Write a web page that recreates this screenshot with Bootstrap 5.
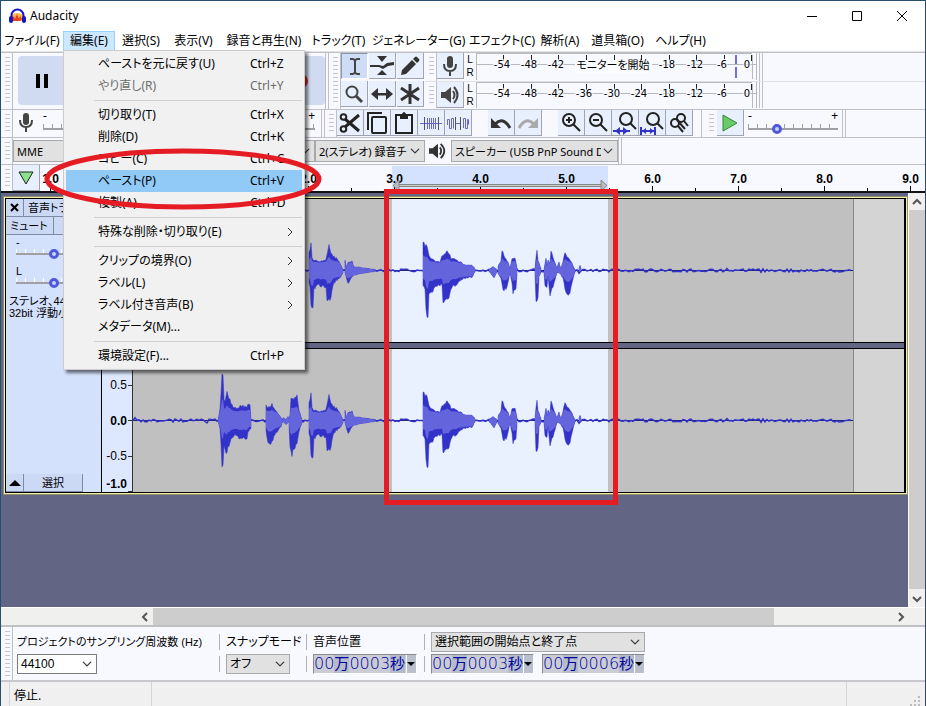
<!DOCTYPE html>
<html lang="ja">
<head>
<meta charset="utf-8">
<meta name="viewport" content="width=device-width, initial-scale=1">
<title>Audacity</title>
<link href="https://cdn.jsdelivr.net/npm/bootstrap@5.3.0/dist/css/bootstrap.min.css" rel="stylesheet">
<style>
:root{--line:#bfbfc6;--tool:#f8f9ff;--btn:#e8f0fe;--panel:#d4e1fc;--wave:#3232c8;--ring:#e51c23}
body{font-family:"Noto Sans","Noto Sans CJK JP",sans-serif;font-size:12px;line-height:16px;color:#000;background:#fff}
body,button,select{font-feature-settings:"palt"}
button{color:inherit;padding:0;border:0;background:none;white-space:nowrap}
svg{display:block;flex:none}
.app-window{min-height:100vh;border:1px solid #24506e;border-bottom:0;overflow:hidden}
.title-bar{height:30px}
.title-bar button{width:45px;height:28px}
.menu-row{height:21px;display:grid;grid-template-columns:62px 52px 52px 53px 88px 61px 99px 68px 48px 67px 59px;border-bottom:1px solid #e4e4e8}
.menu-row>div>button{width:100%;height:20px;border:1px solid transparent}
.menu-row>div>.menu-open{background:#cce8ff;border-color:#99d1ff}
.edit-menu.dropdown-menu{top:19px;left:0;width:242px;padding:2px;border:1px solid #ccc;border-radius:0;background:#f1f1f1;box-shadow:3px 3px 3px #0008;font-size:12px;color:#000}
.edit-menu .dropdown-item{display:flex;align-items:center;height:22px;padding:0 0 0 32px;color:#000}
.edit-menu .dropdown-item:disabled{color:#6d6d6d}
.edit-menu .item-current{background:#91c9f7}
.edit-menu .keys{width:52px}
.edit-menu .dropdown-divider{margin:3px 0 3px 28px;border-color:#d0d0d0;opacity:1}
.dock-row{border-top:1px solid var(--line);background:var(--tool)}
.row-h{height:28px}
.row-l{height:27px}
.grip{width:12px;align-self:stretch;border-right:1px solid var(--line);flex:none;background:repeating-linear-gradient(#c4c4cc 0 1px,transparent 1px 4px) 4px 4px/5px calc(100% - 8px) no-repeat}
.bar-end{width:4px;border-left:1px solid var(--line);border-right:1px solid var(--line);align-self:stretch;flex:none}
.transport{width:312px;padding:3px 0 0 5px;gap:3px}
.transport button{width:49px;height:49px;border-radius:4px;background:#d0daf0}
.mixer{width:308px;padding:0 6px 0 4px}
.tool-btn{width:27px;height:26px;background:var(--btn);border-right:1px solid #a0a4b0;border-bottom:1px solid #a0a4b0;display:flex;align-items:center;justify-content:center;flex:none}
.tool-on{background:#cfdcf6;border:1px solid #8d96aa;border-right-color:#fff;border-bottom-color:#fff}
.tool-grid{display:grid;grid-template-columns:repeat(3,28px);grid-auto-rows:28px}
.lr{width:12px;font:10px/13px "Liberation Sans",sans-serif;text-align:center}
.plain{font-family:"Liberation Sans","Noto Sans CJK JP",sans-serif}
.form-select.win{width:auto;min-width:0;height:22px;padding:0 16px 0 3px;border:1px solid #a9a9ad;border-radius:0;background-color:#e1e1e1;background-position:right 4px center;background-size:10px 10px;font-size:12px;line-height:19px;color:#000}
.dock-row .form-select.win{font-size:11px}
.form-select.white{background-color:#fff;border-color:#7a7a7a}
.slide{appearance:none;height:12px;margin:0;background:linear-gradient(#a0a0a4,#a0a0a4) 0 6px/100% 2px no-repeat,repeating-linear-gradient(90deg,#a0a0a4 0 1px,transparent 1px 9px) 0 2px/100% 4px no-repeat}
.slide::-webkit-slider-thumb{appearance:none;width:10px;height:10px;border:3px solid #5058dc;border-radius:50%;background:#c9d2ff;margin-top:2px}
.slide.pale{background:linear-gradient(#a0a0a4,#a0a0a4) 0 6px/100% 2px no-repeat,repeating-linear-gradient(90deg,#fff 0 1px,transparent 1px 9px) 0 2px/100% 4px no-repeat}
.signs{line-height:12px}
.speed{width:98px}
.time-row{height:29px;background:var(--tool);border-top:1px solid var(--line);border-bottom:2px solid #111}
.stage{background:#626584}
.track{border:2px solid #f3efa5;margin:3px 0 0 2px;outline:1px solid #8f8f70;outline-offset:-1px}
.track-in{border:1px solid #000;border-right-width:2px}
.t-panel{width:96px;background:var(--panel);border-right:1px solid #000;flex:none;font-size:11px;line-height:12px}
.t-panel button{height:18px;background:#ccd9f5;border-right:1px solid #7f8aa5;border-bottom:1px solid #7f8aa5}
.t-gain{padding:2px 10px 0;line-height:10px}
.t-pan{padding:7px 10px 0;line-height:10px}
.t-info{padding:7px 0 0 3px}
.t-gap{height:7px;background:#626584;border-top:1px solid #000;border-bottom:1px solid #000}
.v-scroll{width:17px;background:#f0f0f0;border-left:1px solid #fff;flex:none}
.thumb{background:#cdcdcd}
.h-scroll{height:18px;background:#f0f0ee;border-top:1px solid #fff}
.sel-dock{background:var(--tool);border-top:2px solid var(--line);border-bottom:2px solid #c8c8cc;height:57px}
.sel-dock .form-select.win{height:20px;line-height:17px}
.sel-grid{display:grid;grid-template:20px 20px/202px 87px 118px auto;gap:2px 0;padding:5px 0 0 4px;align-content:start;align-items:center}
.rate-label{font-size:11px}
.sel-group{background:linear-gradient(#b0b0b6,#b0b0b6) 0 2px/1px 16px no-repeat;padding-left:7px;height:20px;line-height:20px}
.clock{height:20px;border:1px solid #8a8a8a;border-right-color:#fff;border-bottom-color:#fff;background:#cbcdd6;color:#00009b;font-family:"DejaVu Sans","Noto Sans CJK JP",sans-serif;font-weight:200;font-size:16px;line-height:18px}
.clock b{font-weight:400;font-size:15px;background:#b4bbcd}
.clock .arrow{width:10px;background:#b9bfcc;border-left:1px solid #fff;color:#000;display:flex;align-items:center}
.status{height:24px;background:#f0f0f0}
.status span{border-left:1px solid #d5d5d5;padding:6px 4px 0}
.over{position:absolute;pointer-events:none;z-index:1100}
.ring{left:42px;top:147px}
.frame{left:383px;top:188px;width:234px;height:316px;border:5px solid var(--ring)}
</style>
<script src="https://cdn.jsdelivr.net/npm/bootstrap@5.3.0/dist/js/bootstrap.bundle.min.js"></script>
</head>
<body>
<div class="app-window d-flex flex-column position-relative">
<header class="title-bar d-flex align-items-center ps-2">
<svg width="17" height="16" viewBox="0 0 17 16"><path d="M3 7Q8 3 14 7V13H3Z" fill="#ffb64a"/><path d="M3 11l2-3 1 3 2-5 2 5 1-3 2 3-2 2H4Z" fill="#e4401c"/><path d="M2.500 10V7.500a6 6 0 0112 0V10" fill="none" stroke="#1414c8" stroke-width="2"/><rect x="0" y="8" width="4" height="7" rx="2" fill="#1414c8"/><rect x="13" y="8" width="4" height="7" rx="2" fill="#1414c8"/></svg>
<span class="ms-1">Audacity</span>
<div class="ms-auto d-flex">
<button aria-label="最小化"><svg class="m-auto" width="11" height="11"><path d="M0 5.500h10" stroke="#000"/></svg></button>
<button aria-label="最大化"><svg class="m-auto" width="11" height="11"><path d="M.5.500h9v9h-9z" stroke="#000" fill="none"/></svg></button>
<button aria-label="閉じる"><svg class="m-auto" width="11" height="11"><path d="M0 0l10 10M10 0L0 10" stroke="#000"/></svg></button>
</div>
</header>

<nav class="menu-row">
<div><button>ファイル(F)</button></div>
<div class="position-relative"><button class="menu-open" aria-expanded="true">編集(E)</button>
<ul class="dropdown-menu edit-menu show">
<li><button class="dropdown-item">ペーストを元に戻す(U)<span class="keys ms-auto">Ctrl+Z</span></button></li>
<li><button class="dropdown-item" disabled>やり直し(R)<span class="keys ms-auto">Ctrl+Y</span></button></li>
<li><hr class="dropdown-divider"></li>
<li><button class="dropdown-item">切り取り(T)<span class="keys ms-auto">Ctrl+X</span></button></li>
<li><button class="dropdown-item">削除(D)<span class="keys ms-auto">Ctrl+K</span></button></li>
<li><button class="dropdown-item">コピー(C)<span class="keys ms-auto">Ctrl+C</span></button></li>
<li><button class="dropdown-item item-current">ペースト(P)<span class="keys ms-auto">Ctrl+V</span></button></li>
<li><button class="dropdown-item">複製(A)<span class="keys ms-auto">Ctrl+D</span></button></li>
<li><hr class="dropdown-divider"></li>
<li><button class="dropdown-item">特殊な削除・切り取り(E)<svg class="ms-auto me-2" width="8" height="10"><path d="M2 1l4 4-4 4" fill="none" stroke="#333"/></svg></button></li>
<li><hr class="dropdown-divider"></li>
<li><button class="dropdown-item">クリップの境界(O)<svg class="ms-auto me-2" width="8" height="10"><path d="M2 1l4 4-4 4" fill="none" stroke="#333"/></svg></button></li>
<li><button class="dropdown-item">ラベル(L)<svg class="ms-auto me-2" width="8" height="10"><path d="M2 1l4 4-4 4" fill="none" stroke="#333"/></svg></button></li>
<li><button class="dropdown-item">ラベル付き音声(B)<svg class="ms-auto me-2" width="8" height="10"><path d="M2 1l4 4-4 4" fill="none" stroke="#333"/></svg></button></li>
<li><button class="dropdown-item">メタデータ(M)...</button></li>
<li><hr class="dropdown-divider"></li>
<li><button class="dropdown-item">環境設定(F)...<span class="keys ms-auto">Ctrl+P</span></button></li>
</ul></div>
<div><button>選択(S)</button></div>
<div><button>表示(V)</button></div>
<div><button>録音と再生(N)</button></div>
<div><button>トラック(T)</button></div>
<div><button>ジェネレーター(G)</button></div>
<div><button>エフェクト(C)</button></div>
<div><button>解析(A)</button></div>
<div><button>道具箱(O)</button></div>
<div><button>ヘルプ(H)</button></div>
</nav>

<section class="dock-row d-flex">
<div class="grip"></div>
<div class="transport d-flex">
<button aria-label="一時停止"><svg class="m-auto" width="14" height="14"><path d="M1 0h4v14H1zM9 0h4v14H9z"/></svg></button>
<button aria-label="再生"><svg class="m-auto" width="16" height="16"><path d="M2 1l12 7-12 7z" fill="#3a3"/></svg></button>
<button aria-label="停止"><svg class="m-auto" width="16" height="16"><path d="M2 2h12v12H2z"/></svg></button>
<button aria-label="先頭へ"><svg class="m-auto" width="16" height="16"><path d="M1 2h2v12H1zM14 2v12L4 8z"/></svg></button>
<button aria-label="末尾へ"><svg class="m-auto" width="16" height="16"><path d="M13 2h2v12h-2zM2 2v12l10-6z"/></svg></button>
<button aria-label="録音"><svg class="m-auto" width="16" height="16"><circle cx="8" cy="8" r="7" fill="#d22"/></svg></button>
</div>
<div class="bar-end"></div>
<div class="grip"></div>
<div class="tool-grid">
<button class="tool-btn tool-on" aria-label="選択ツール"><svg width="22" height="22" viewBox="0 0 22 22"><path d="M6 3h3l2 1 2-1h3v2h-3l-1 1v11l1 1h3v2h-3l-2-1-2 1H6v-2h3l1-1V6L9 5H6z" fill="#444"/></svg></button>
<button class="tool-btn" aria-label="エンベロープツール"><svg width="24" height="22" viewBox="0 0 24 22"><path d="M7 1h10l-5 6zM12 15l5 5H7zM0 10h9l4 1 4-3 7-1v3l-6 1-5 3-4-2H0z" fill="#333"/></svg></button>
<button class="tool-btn" aria-label="描画ツール"><svg width="20" height="20" viewBox="0 0 20 20"><path d="M1 19l1-5L12 4l4 4L6 18zM13 3l2-2q1-1 2 0l2 2q1 1 0 2l-2 2z" fill="#333"/></svg></button>
<button class="tool-btn" aria-label="ズームツール"><svg width="20" height="20" viewBox="0 0 20 20" fill="none" stroke="#444"><circle cx="8" cy="8" r="5.500" stroke-width="2"/><path d="M12 12l6 6" stroke-width="3"/></svg></button>
<button class="tool-btn" aria-label="タイムシフトツール"><svg width="22" height="14" viewBox="0 0 22 14"><path d="M0 7l7-6v5h8V1l7 6-7 6V8.500H7V13z" fill="#333"/></svg></button>
<button class="tool-btn" aria-label="マルチツール"><svg width="20" height="20" viewBox="0 0 20 20"><path d="M10 0v20M1 4l18 12M1 16L19 4" stroke="#333" stroke-width="3"/></svg></button>
</div>
<div class="flex-grow-1 overflow-hidden">
<div class="row-h d-flex">
<div class="grip"></div>
<button class="tool-btn" aria-label="録音レベル"><svg width="18" height="22" viewBox="0 0 18 22"><rect x="6" y="1" width="6" height="12" rx="3" fill="#444"/><path d="M3 9q0 7 6 7t6-7M9 16v5" fill="none" stroke="#444" stroke-width="2"/></svg></button>
<div class="lr">L<br>R</div>
<svg width="283" height="27" font-family="DejaVu Sans" font-size="10" text-anchor="middle"><path d="M.5 0v27M0 .5h276M0 11.500h280M276.500 2v24M280.500 0v27" stroke="#b8b8c0"/><path d="M27.500 2v6M55.500 2v6M82.500 2v6M110.500 2v5M138.500 2v5M165.500 2v5M193.500 2v6M220.500 2v6M248.500 2v6M275.500 2v6" stroke="#222"/><g fill="#000" stroke="#f8f9ff" stroke-width="2" paint-order="stroke"><text x="26" y="15">-54</text><text x="53" y="15">-48</text><text x="80" y="15">-42</text><text x="191" y="15">-18</text><text x="219" y="15">-12</text><text x="246" y="15">-6</text><text x="271" y="15">0</text></g><rect x="99" y="7" width="77" height="13" fill="#fbfcff"/><text x="137" y="16" font-family="Noto Sans CJK JP" font-size="11">モニターを開始</text><path d="M260 2v9M260 14v11" stroke="#7070d8" stroke-width="2"/></svg><div class="bar-end"></div>
</div>
<div class="row-l d-flex border-top">
<div class="grip"></div>
<button class="tool-btn" aria-label="再生レベル"><svg width="20" height="20" viewBox="0 0 20 20"><path d="M1 7h4l6-5v16l-6-5H1z" fill="#444"/><path d="M13 6q3 4 0 8M14 2q7 8 0 16" fill="none" stroke="#444" stroke-width="2"/></svg></button>
<div class="lr">L<br>R</div>
<svg width="283" height="26" font-family="DejaVu Sans" font-size="10" text-anchor="middle"><path d="M.5 0v27M0 .5h276M0 11.500h280M276.500 2v24M280.500 0v27" stroke="#b8b8c0"/><path d="M27.500 2v6M55.500 2v6M82.500 2v6M110.500 2v6M138.500 2v6M165.500 2v6M193.500 2v6M220.500 2v6M248.500 2v6M275.500 2v6" stroke="#222"/><g fill="#000" stroke="#f8f9ff" stroke-width="2" paint-order="stroke"><text x="26" y="15">-54</text><text x="53" y="15">-48</text><text x="80" y="15">-42</text><text x="108" y="15">-36</text><text x="136" y="15">-30</text><text x="163" y="15">-24</text><text x="191" y="15">-18</text><text x="219" y="15">-12</text><text x="246" y="15">-6</text><text x="271" y="15">0</text></g></svg><div class="bar-end"></div>
</div>
</div>
</section>

<section class="dock-row row-h d-flex">
<div class="grip"></div>
<div class="mixer d-flex">
<svg width="18" height="24" viewBox="0 0 18 24"><rect x="6" y="3" width="6" height="12" rx="3" fill="#444"/><path d="M3 10q0 7 6 7t6-7M9 17v5" fill="none" stroke="#444" stroke-width="2"/></svg>
<div class="flex-grow-1 px-2"><div class="d-flex justify-content-between signs"><span>-</span><span>+</span></div><input class="slide d-block w-100" type="range" value="80" aria-label="録音音量"></div>
<svg width="18" height="24" viewBox="0 0 20 20"><path d="M1 7h4l6-5v16l-6-5H1z" fill="#444"/></svg>
<div class="flex-grow-1 ps-2"><div class="d-flex justify-content-between signs"><span>-</span><span>+</span></div><input class="slide d-block w-100" type="range" value="60" aria-label="再生音量"></div>
</div>
<div class="bar-end"></div>
<div class="grip"></div>
<button class="tool-btn" aria-label="切り取り"><svg width="22" height="22" viewBox="0 0 22 22" fill="none" stroke="#222"><circle cx="4.500" cy="5" r="2.800" stroke-width="2"/><circle cx="4.500" cy="17" r="2.800" stroke-width="2"/><path d="M6 7l14 12M6 15L20 3" stroke-width="3"/></svg></button>
<button class="tool-btn" aria-label="コピー"><svg width="22" height="24" viewBox="0 0 22 24" fill="none" stroke="#222" stroke-width="2"><rect x="6" y="6" width="14" height="16" rx="1"/><path d="M2 19V2h14"/></svg></button>
<button class="tool-btn" aria-label="ペースト"><svg width="20" height="24" viewBox="0 0 20 24"><path d="M2 4h16v18H2z" fill="none" stroke="#222" stroke-width="2"/><path d="M6 3h2q2-4 4 0h2v5H6z" fill="#222"/></svg></button>
<button class="tool-btn" aria-label="トリム"><svg width="22" height="20" viewBox="0 0 22 20"><path d="M0 10.500h22M7.500 5v11M9.500 5v11M11.500 5v11M13.500 5v11M15.500 5v11" stroke="#6666dd"/><path d="M4.500 4v13M18.500 4v13" stroke="#555"/></svg></button>
<button class="tool-btn" aria-label="無音化"><svg width="22" height="20" viewBox="0 0 22 20"><path d="M.5 12V6.500h2v9h2v-10h2v10M8 10.500h6M16.500 15V5.500h2v10h2v-9h1v5" stroke="#6666dd" fill="none"/><path d="M8.500 4v13M13.500 4v13" stroke="#555"/></svg></button>
<button class="tool-btn ms-3" aria-label="元に戻す"><svg width="22" height="16" viewBox="0 0 22 16"><path d="M5 9q8-8 15 4" fill="none" stroke="#333" stroke-width="3"/><path d="M1 3v10h10z" fill="#333"/></svg></button>
<button class="tool-btn" aria-label="やり直し"><svg width="22" height="16" viewBox="0 0 22 16"><path d="M17 9Q9 1 2 13" fill="none" stroke="#a9a9a9" stroke-width="3"/><path d="M21 3v10H11z" fill="#a9a9a9"/></svg></button>
<button class="tool-btn ms-3" aria-label="拡大"><svg width="22" height="22" viewBox="0 0 22 22" fill="none" stroke="#222" stroke-width="2"><circle cx="9" cy="8" r="6"/><path d="M13 12l7 7M6 8h6M9 5v6"/></svg></button>
<button class="tool-btn" aria-label="縮小"><svg width="22" height="22" viewBox="0 0 22 22" fill="none" stroke="#222" stroke-width="2"><circle cx="9" cy="8" r="6"/><path d="M13 12l7 7M6 8h6"/></svg></button>
<button class="tool-btn" aria-label="選択範囲に合わせる"><svg width="24" height="24" viewBox="0 0 24 24" fill="none" stroke="#222" stroke-width="2"><circle cx="13" cy="8" r="6"/><path d="M17 12l6 6"/><path d="M0 20h17" stroke="#33c"/><path d="M7 16v8l-5-4zM10 16v8l5-4z" fill="#33c" stroke="none"/></svg></button>
<button class="tool-btn" aria-label="全体に合わせる"><svg width="24" height="24" viewBox="0 0 24 24" fill="none" stroke="#222" stroke-width="2"><circle cx="13" cy="8" r="6"/><path d="M17 12l6 6"/><path d="M2 20h12M1 16v8M15 16v8" stroke="#33c"/><path d="M6 17v6l-4-3zM10 17v6l4-3z" fill="#33c" stroke="none"/></svg></button>
<button class="tool-btn" aria-label="ズーム切替"><svg width="22" height="22" viewBox="0 0 22 22" fill="none" stroke="#222" stroke-width="2"><circle cx="7" cy="11" r="4"/><circle cx="13" cy="6" r="4"/><path d="M10 14l5 6M16 9l4 5M9 8l8 9"/></svg></button>
<div class="bar-end ms-2 border-end-0"></div>
<div class="grip border-end-0"></div>
<button class="tool-btn" aria-label="指定速度で再生"><svg width="18" height="20" viewBox="0 0 18 20"><path d="M2 2l14 8-14 8z" fill="#66cc66" stroke="#398439"/></svg></button>
<div class="speed px-1">
<div class="d-flex justify-content-between signs"><span>-</span><span>+</span></div>
<input class="slide d-block w-100" type="range" value="30" aria-label="再生速度">
</div>
<div class="bar-end"></div>
</section>

<section class="dock-row row-l d-flex align-items-center">
<div class="grip"></div>
<select class="form-select win" style="width:100px" aria-label="オーディオホスト"><option>MME</option></select>
<select class="form-select win" style="width:202px" aria-label="録音デバイス"><option>マイク (USB PnP Sound)</option></select>
<select class="form-select win" style="width:110px" aria-label="録音チャンネル"><option>2(ステレオ) 録音チ</option></select>
<svg class="mx-1" width="18" height="20" viewBox="0 0 20 20"><path d="M0 7h4l6-5v16l-6-5H0z" fill="#333"/><path d="M12 6q3 4 0 8M13 2q8 8 0 16" fill="none" stroke="#333" stroke-width="2"/></svg>
<select class="form-select win" style="width:167px" aria-label="再生デバイス"><option>スピーカー (USB PnP Sound D</option></select>
<div class="bar-end"></div>
</section>

<section class="time-row d-flex">
<div class="grip"></div>
<button class="tool-btn" aria-label="再生ヘッドの固定"><svg width="18" height="16" viewBox="0 0 18 16"><path d="M2 2h14L9 14z" fill="#8be08b" stroke="#222"/></svg></button>
<svg class="flex-grow-1" style="width:0" height="26" font-family="Liberation Sans" font-size="12" font-weight="700" text-anchor="middle" id="ruler"></svg>
</section>

<main class="stage d-flex flex-grow-1">
<div class="flex-grow-1 overflow-hidden">
<div class="track"><div class="track-in d-flex">
<div class="t-panel d-flex flex-column plain">
<div class="d-flex"><button style="width:18px" aria-label="トラックを閉じる"><svg class="m-auto" width="9" height="9"><path d="M1 1l7 7M8 1L1 8" stroke="#000" stroke-width="2"/></svg></button><button class="flex-grow-1 text-start ps-1">音声トラック</button></div>
<div class="d-flex"><button style="width:48px" class="text-start ps-1">ミュート</button><button class="flex-grow-1">ソロ</button></div>
<div class="t-gain">-<input class="slide pale d-block w-100" type="range" value="50" aria-label="ゲイン"></div>
<div class="t-pan">L<input class="slide pale d-block w-100" type="range" value="50" aria-label="パン"></div>
<div class="t-info text-nowrap">ステレオ、44100Hz<br>32bit 浮動小数点</div>
<div class="d-flex mt-auto"><button style="width:18px" aria-label="折りたたむ"><svg class="m-auto" width="12" height="7"><path d="M0 7l6-6 6 6z"/></svg></button><button style="width:59px">選択</button></div>
</div>
<div class="flex-grow-1 overflow-hidden">
<svg class="chan w-100" height="143"></svg>
<div class="t-gap"></div>
<svg class="chan w-100" height="143"></svg>
</div>
</div></div>
</div>
<div class="v-scroll d-flex flex-column">
<svg width="16" height="17"><path d="M4 11l4-4 4 4" fill="none" stroke="#555" stroke-width="2"/></svg>
<div class="thumb flex-grow-1"></div>
<svg width="16" height="18"><path d="M4 8l4 4 4-4" fill="none" stroke="#555" stroke-width="2"/></svg>
</div>
</main>
<div class="h-scroll d-flex align-items-center">
<svg style="margin-left:135px" width="17" height="16"><path d="M11 4L7 8l4 4" fill="none" stroke="#555" stroke-width="2"/></svg>
<div class="d-flex flex-grow-1 align-self-stretch"><div class="thumb" style="width:84%"></div></div>
<svg class="me-3" width="17" height="16"><path d="M7 4l4 4-4 4" fill="none" stroke="#555" stroke-width="2"/></svg>
</div>

<section class="sel-dock d-flex plain">
<div class="grip"></div>
<div class="sel-grid flex-grow-1">
<label for="rate" class="text-nowrap rate-label">プロジェクトのサンプリング周波数 (Hz)</label>
<div class="sel-group"><label for="snap" class="text-nowrap">スナップモード</label></div>
<div class="sel-group">音声位置</div>
<div class="sel-group"><select class="form-select win" aria-label="選択範囲の種類" style="width:214px"><option>選択範囲の開始点と終了点</option></select></div>
<select id="rate" class="form-select win white" style="width:80px"><option>44100</option></select>
<div class="sel-group"><select id="snap" class="form-select win" style="width:64px"><option>オフ</option></select></div>
<div class="sel-group"><div class="clock d-flex" style="width:104px">00<b>万</b>0003<b>秒</b><span class="arrow ms-auto"><svg width="8" height="5"><path d="M0 0h8L4 4z"/></svg></span></div></div>
<div class="sel-group d-flex gap-2"><div class="clock d-flex" style="width:103px">00<b>万</b>0003<b>秒</b><span class="arrow ms-auto"><svg width="8" height="5"><path d="M0 0h8L4 4z"/></svg></span></div><div class="clock d-flex" style="width:103px">00<b>万</b>0006<b>秒</b><span class="arrow ms-auto"><svg width="8" height="5"><path d="M0 0h8L4 4z"/></svg></span></div></div>
</div>
</section>
<footer class="status d-flex"><span style="width:142px" class="ms-2">停止.</span><span class="flex-grow-1"></span><span style="width:79px" class="d-flex justify-content-end align-items-end"><svg width="11" height="11"><path d="M8 1h2v2H8zM4 5h2v2H4zM8 5h2v2H8zM0 9h2v2H0zM4 9h2v2H4zM8 9h2v2H8z" fill="#bbb"/></svg></span></footer>

<svg class="over ring" width="282" height="64"><ellipse cx="140" cy="31" rx="136" ry="28" fill="none" stroke="#e51c23" stroke-width="5"/></svg>
<div class="over frame"></div>
</div>
<script>
// time ruler: one second is 86px wide
(function(){
  let s='<rect x="352" y="1" width="216" height="25" fill="#d4e2ff"/>';
  for(let i=0;i<=20;i++){
    const x=10.5+i*43,major=i%2===0;
    s+=`<path d="M${x} ${major?21:23}V26" stroke="#000"/>`;
    if(major)s+=`<text x="${x}" y="18">${i===0?'1.0':(i/2-1).toFixed(1)}</text>`;
  }
  s+='<path d="M354 20.500H566" stroke="#888" stroke-width="3"/><path d="M354 20.500H566" stroke="#ccc"/><path d="M359 15v11l-6-5.500zM561 15v11l6-5.500z" fill="#bbb" stroke="#888"/>';
  document.getElementById('ruler').innerHTML=s;
})();
// envelopes: [x, height] pairs per sound, above and below the centre line
const sounds=[
 [[[86,0],[88,12],[89,25],[90,46],[91,46],[92,20],[93,18],[94,27],[96,27],[98,20],[102,14],[105,11],[108,15],[110,15],[113,14],[116,16],[118,15],[119,0]],
  [[86,0],[88,8],[89,27],[90,49],[92,49],[92,25],[94,35],[96,27],[100,18],[104,14],[107,18],[115,19],[116,12],[119,8]]],
 [[[134,15],[138,13],[140,16],[143,11],[147,6],[151,0]],[[134,10],[136,23],[139,25],[142,16],[146,10],[149,6],[151,0]]],
 [[[151,3],[154,1],[156,4],[157,1]],[[151,1],[154,4],[157,1]]],
 [[[157,2],[158,5],[159,24],[162,22],[165,24],[167,10],[170,1]],[[157,5],[158,25],[160,38],[161,28],[165,25],[166,18],[168,8],[170,2]]],
 [[[177,17],[179,28],[180,14],[182,10],[188,9],[194,11],[196,22],[197,26],[199,17],[201,14],[204,13],[206,11],[209,5],[211,1]],
  [[177,12],[178,17],[179,36],[181,36],[182,18],[186,15],[194,17],[195,33],[198,30],[199,27],[201,15],[204,10],[208,8],[211,2]]],
 [[[213,10],[214,3],[216,9],[220,9],[222,4],[228,3],[236,2],[243,1]],[[213,2],[216,13],[218,10],[221,5],[228,3],[243,1]]],
 [[[291,27],[295,27],[296,20],[298,14],[303,9],[308,9],[310,15],[315,21],[317,17],[319,12],[326,10],[334,5],[339,6],[343,2]],
  [[291,15],[293,20],[294,44],[296,44],[297,25],[301,20],[306,15],[310,14],[311,30],[317,27],[319,18],[324,14],[331,8],[340,7],[343,1]]],
 [[[357,1],[361,4],[365,1]],[[357,1],[362,7],[365,1]]],
 [[[366,4],[369,10],[370,21],[373,14],[376,8],[378,2]],[[366,3],[369,8],[371,21],[374,19],[376,12],[378,2]]],
 [[[378,2],[380,13],[383,14],[385,2]],[[378,2],[380,14],[381,22],[384,20],[385,3]]],
 [[[403,2],[405,23],[406,10],[409,2]],[[403,3],[404,29],[406,28],[407,6],[409,2]]],
 [[[412,1],[414,12],[415,4],[416,10],[418,8],[419,18],[421,14],[423,8],[425,2]],[[412,2],[413,16],[415,16],[416,5],[418,25],[420,19],[423,10],[425,2]]],
 [[[425,3],[427,8],[428,3],[430,5],[433,18],[436,14],[439,9],[443,1]],[[425,2],[428,3],[431,8],[434,24],[438,22],[441,8],[443,1]]],
 [[[447,2],[448,5],[449,2]],[[447,1],[449,1]]]
];
const mid=71.5,x0=30;
let seed=7;
const rnd=()=>(seed=(seed*1103515245+12345)%2147483648)/2147483648;
// one sample per pixel column, with a little roughness
const fill=p=>{
  const o=[];
  for(let i=0;i<p.length-1;i++){
    const [xa,ha]=p[i],[xb,hb]=p[i+1];
    for(let x=xa;x<xb;x++)o.push([x,(ha+(hb-ha)*(x-xa)/(xb-xa))*(.88+rnd()*.2)]);
  }
  o.push(p[p.length-1]);
  return o;
};
const dense=sounds.map(([u,d])=>[fill(u),fill(d)]);
const at=(p,k)=>p.map(([x,h])=>(x+x0)+' '+(mid+k*h).toFixed(1));
const shape=(u,d)=>'M'+at(u,-1).concat(at([...d].reverse(),1)).join('L')+'Z';
let noise='M'+(x0+1)+' '+mid;
for(let x=3;x<=720;x+=2)noise+=`L${x+x0} ${(mid+(rnd()-.5)*(x%37<4?6:3)).toFixed(1)}`;
const outer=dense.map(([u,d])=>shape(u,d)).join('');
const inner=dense.map(([u,d])=>shape(u.map(([x,h])=>[x,Math.min(h,5+h*.35)]),d.map(([x,h])=>[x,Math.min(h,4+h*.3)]))).join('');
document.querySelectorAll('.chan').forEach(c=>{
  c.innerHTML=`<rect width="100%" height="143" fill="#d4d4d4"/><rect width="751" height="143" fill="#c0c0c0"/><path d="M751.500 0v143" stroke="#888"/><rect x="290" width="216" height="143" fill="#e9f1fe"/><rect width="31" height="143" fill="#dde8ff"/><path d="M30.500 0v143M26 .5h4M26 36.500h4M26 71.500h4M26 107.500h4M26 142.500h4" stroke="#333"/>
<g font-family="Liberation Sans" font-size="12" text-anchor="end"><text x="25" y="11" font-weight="700">1.0</text><text x="25" y="40">0.5</text><text x="25" y="76" font-weight="700">0.0</text><text x="25" y="111">-0.5</text><text x="25" y="139" font-weight="700">-1.0</text></g>
<path d="M31 71.500H751" stroke="#22226a"/><path d="${noise}" fill="none" stroke="#3232c8" stroke-width="1.500"/><path d="${outer}" fill="#3232c8" stroke="#3232c8" stroke-width=".5"/><path d="${inner}" fill="#6464dc"/>`;
});
</script>
</body>
</html>
